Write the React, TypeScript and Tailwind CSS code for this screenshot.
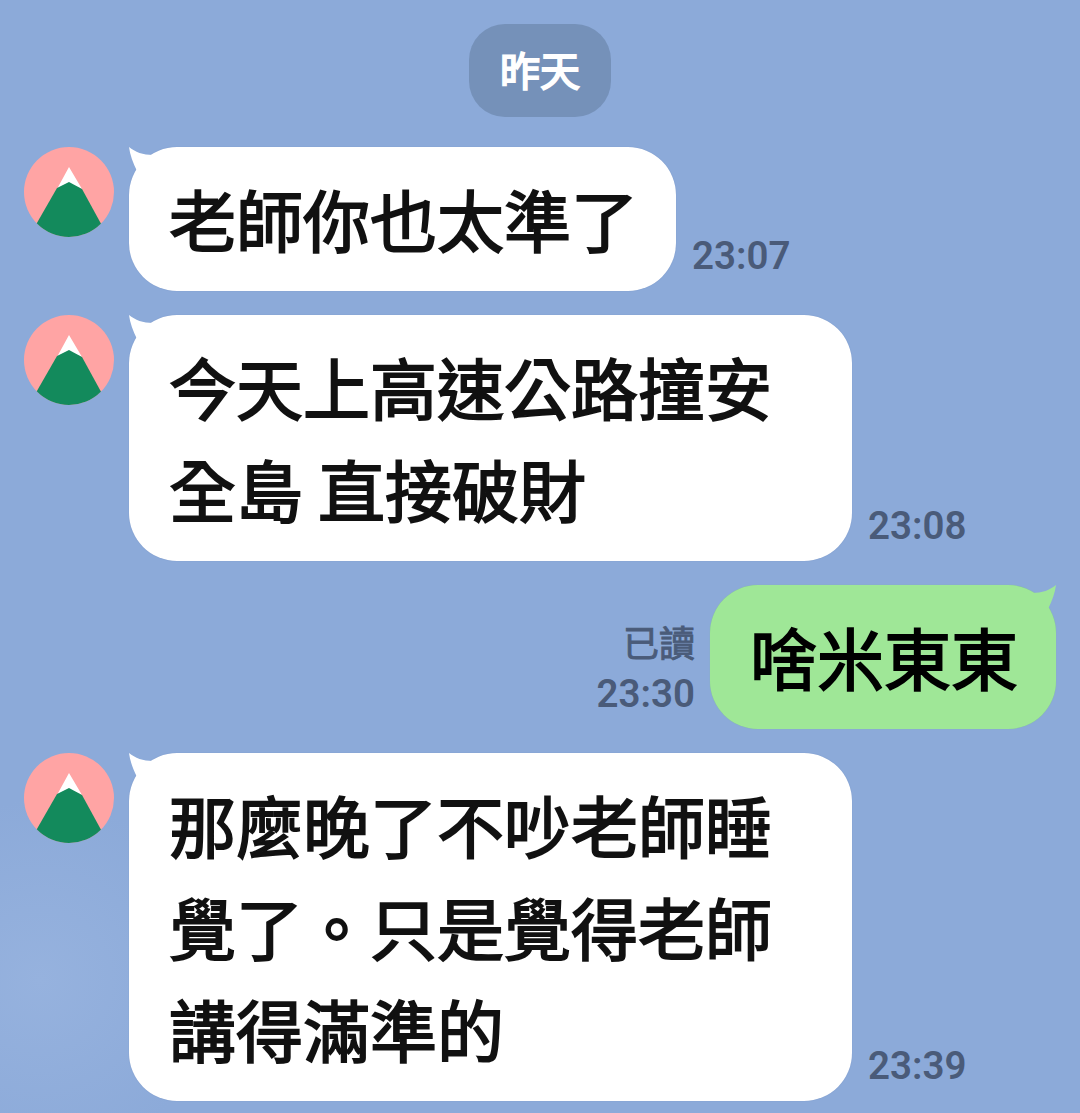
const cjk = "font-['Noto_Sans_CJK_TC','Noto_Sans',sans-serif]"
const heavy = '[-webkit-text-stroke:1.8px_currentColor]'
const medium = '[-webkit-text-stroke:0.9px_currentColor]'

const Avatar = () => (
  <svg width="90" height="90" viewBox="0 0 90 90" className="shrink-0">
    <defs>
      <clipPath id="avatar-clip">
        <circle cx="45" cy="45" r="45" />
      </clipPath>
    </defs>
    <g clipPath="url(#avatar-clip)">
      <rect width="90" height="90" fill="#ffa4a4" />
      <path d="M45 20 L58 42 L45 36 L33 42 Z" fill="#ffffff" />
      <path d="M45 35 L33 41 L2 95 L87 95 L58 42 Z" fill="#138a5c" />
    </g>
  </svg>
)

const Tail = ({ color, flip }: { color: string; flip?: boolean }) => (
  <svg
    width="30"
    height="30"
    viewBox="0 0 30 30"
    className={flip ? 'absolute top-0 right-0 -scale-x-100' : 'absolute top-0 left-0'}
  >
    <path d="M0 0 C6 5 14 8 24 8 L8 24 C4 16 1 8 0 0 Z" fill={color} />
  </svg>
)

const IncomingRow = ({ lines, time, wide }: { lines: string[]; time: string; wide?: boolean }) => (
  <div className="flex items-start pl-6">
    <Avatar />
    <div
      className={`relative ml-[15px] rounded-[48px] bg-white pt-[20px] pr-[38px] pb-[22px] pl-[40px] shadow-[0_0_1px_#6f8cc0] ${
        wide ? 'w-[723px]' : ''
      }`}
    >
      <Tail color="#ffffff" />
      <div className={`relative whitespace-pre text-[67px] leading-[102px] font-normal text-[#111111] ${heavy} ${cjk}`}>
        {lines.map((line) => (
          <div key={line}>{line}</div>
        ))}
      </div>
    </div>
    <div className="ml-4 self-end pb-[13px] font-['Roboto',sans-serif] text-[38.500px] leading-[44px] font-semibold text-[#4a5b79]">
      {time}
    </div>
  </div>
)

const App = () => (
  <div className="flex h-[1113px] w-[1080px] flex-col overflow-hidden bg-[#8caad9] bg-[radial-gradient(circle_at_40px_980px,#96b2de_0%,#8caad9_180px)]">
    <div className="flex justify-center pt-6">
      <div
        className={`flex h-[93px] w-[142px] items-center justify-center rounded-[36px] bg-[#7591b9] pb-[3px] text-[40px] font-normal text-white ${heavy} ${cjk}`}
      >
        昨天
      </div>
    </div>

    <div className="mt-[30px] flex flex-col gap-6">
      <IncomingRow lines={['老師你也太準了']} time="23:07" />
      <IncomingRow wide lines={['今天上高速公路撞安', '全島 直接破財']} time="23:08" />

      <div className="flex items-end justify-end pr-6">
        <div className="mr-[15px] flex flex-col items-end pb-[13px] text-[#4a5b79]">
          <div className={`text-[36px] leading-[44px] font-normal ${medium} ${cjk}`}>已讀</div>
          <div className="mt-[9px] font-['Roboto',sans-serif] text-[38.500px] leading-[44px] font-semibold">23:30</div>
        </div>
        <div className="relative rounded-[48px] bg-[#9fe797] pt-[20px] pr-[38px] pb-[22px] pl-[40px] shadow-[0_0_1px_#7fc08c]">
          <Tail color="#9fe797" flip />
          <div className={`relative text-[67px] leading-[102px] font-normal text-black ${heavy} ${cjk}`}>啥米東東</div>
        </div>
      </div>

      <IncomingRow wide lines={['那麼晚了不吵老師睡', '覺了。只是覺得老師', '講得滿準的']} time="23:39" />
    </div>
  </div>
)

export default App
